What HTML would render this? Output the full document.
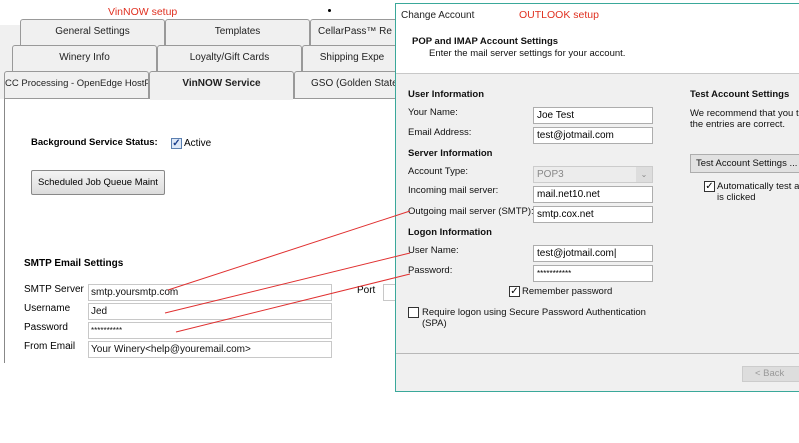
<!DOCTYPE html>
<html><head><style>
*{margin:0;padding:0;box-sizing:border-box}
body{width:799px;height:443px;background:#fff;position:relative;overflow:hidden;font-family:"Liberation Sans",sans-serif;font-size:10px;color:#000}
.a{position:absolute;white-space:nowrap}
.tab{position:absolute;height:26px;border:1px solid #999;border-bottom:none;background:#f0f0f0;text-align:center;line-height:24px;font-size:10px;color:#222;border-radius:3px 3px 0 0;overflow:hidden;white-space:nowrap}
.in{position:absolute;height:17px;border:1px solid #c8c8c8;background:#fff;font-size:10px;line-height:15px;padding-left:2px;color:#111}
.o{font-family:"Liberation Sans",sans-serif;font-size:9.5px;color:#111}
.oi{position:absolute;height:17px;border:1px solid #adadad;background:#fff;font-family:"Liberation Sans",sans-serif;font-size:10px;line-height:15px;padding-left:3px}
</style></head><body>
<div class="a" style="left:108px;top:6px;color:#e03020;font-size:10.5px">VinNOW setup</div>
<div class="a" style="left:328px;top:9px;width:3px;height:3px;background:#000;border-radius:2px"></div>
<div class="a" style="left:0;top:25px;width:395px;height:74px;background:#f0f0f0"></div>
<div class="tab" style="left:20px;top:19px;width:145px;height:26px">General Settings</div>
<div class="tab" style="left:165px;top:19px;width:145px">Templates</div>
<div class="tab" style="left:310px;top:19px;width:90px">CellarPass™ Re</div>
<div class="tab" style="left:12px;top:45px;width:145px">Winery Info</div>
<div class="tab" style="left:157px;top:45px;width:145px">Loyalty/Gift Cards</div>
<div class="tab" style="left:302px;top:45px;width:100px">Shipping Expe</div>
<div class="tab" style="left:4px;top:71px;width:145px;height:28px;font-size:9.5px">CC Processing - OpenEdge HostPay</div>
<div class="tab" style="left:149px;top:71px;width:145px;height:28px;font-weight:bold">VinNOW Service</div>
<div class="tab" style="left:294px;top:71px;width:110px;height:28px;text-align:left;padding-left:16px">GSO (Golden State O</div>
<div class="a" style="left:4px;top:98px;width:395px;height:265px;border-left:1px solid #888;border-top:1px solid #999;background:#fff"></div>
<div class="a" style="left:150px;top:97px;width:143px;height:3px;background:#f0f0f0"></div>
<div class="a" style="left:31px;top:137px;font-weight:bold;font-size:9.5px">Background Service Status:</div>
<div class="a" style="left:171px;top:138px;width:11px;height:11px;border:1px solid #5a7fb0;background:#dde8f7;font-size:10px;line-height:9px;text-align:center;color:#1a3d8a;font-weight:bold">✓</div>
<div class="a" style="left:184px;top:138px">Active</div>
<div class="a" style="left:31px;top:170px;width:134px;height:25px;border:1px solid #888;background:linear-gradient(#f4f4f4,#dcdcdc);border-radius:2px;text-align:center;line-height:23px;font-size:9.5px">Scheduled Job Queue Maint</div>
<div class="a" style="left:24px;top:258px;font-weight:bold">SMTP Email Settings</div>
<div class="a" style="left:24px;top:284px">SMTP Server</div>
<div class="a" style="left:24px;top:303px">Username</div>
<div class="a" style="left:24px;top:322px">Password</div>
<div class="a" style="left:24px;top:341px">From Email</div>
<div class="in" style="left:88px;top:284px;width:244px">smtp.yoursmtp.com</div>
<div class="in" style="left:88px;top:303px;width:244px">Jed</div>
<div class="in" style="left:88px;top:322px;width:244px;font-size:8px">**********</div>
<div class="in" style="left:88px;top:341px;width:244px">Your Winery&lt;help@youremail.com&gt;</div>
<div class="a" style="left:357px;top:285px">Port</div>
<div class="in" style="left:383px;top:284px;width:20px"></div>
<div class="a" style="left:395px;top:3px;width:404px;height:389px;border:1px solid #3aa89a;border-right:none;background:#f0f0f0"></div>
<div class="a" style="left:396px;top:4px;width:403px;height:70px;background:#fff;border-bottom:1px solid #c8c8c8"></div>
<div class="a o" style="left:401px;top:10px;font-size:10px;color:#222">Change Account</div>
<div class="a" style="left:519px;top:9px;color:#e03020;font-size:10.5px">OUTLOOK setup</div>
<div class="a o" style="left:412px;top:36px;font-weight:bold">POP and IMAP Account Settings</div>
<div class="a o" style="left:429px;top:48px">Enter the mail server settings for your account.</div>
<div class="a o" style="left:408px;top:89px;font-weight:bold">User Information</div>
<div class="a o" style="left:408px;top:107px">Your Name:</div>
<div class="a o" style="left:408px;top:127px">Email Address:</div>
<div class="a o" style="left:408px;top:148px;font-weight:bold">Server Information</div>
<div class="a o" style="left:408px;top:166px">Account Type:</div>
<div class="a o" style="left:408px;top:185px">Incoming mail server:</div>
<div class="a o" style="left:408px;top:206px">Outgoing mail server (SMTP):</div>
<div class="a o" style="left:408px;top:227px;font-weight:bold">Logon Information</div>
<div class="a o" style="left:408px;top:245px">User Name:</div>
<div class="a o" style="left:408px;top:265px">Password:</div>
<div class="oi" style="left:533px;top:107px;width:120px">Joe Test</div>
<div class="oi" style="left:533px;top:127px;width:120px">test@jotmail.com</div>
<div class="oi" style="left:533px;top:166px;width:120px;background:#ececec;color:#888;border-color:#ccc">POP3<span style="position:absolute;right:0;top:0;width:16px;height:15px;background:#ddd;text-align:center;font-size:8px">⌄</span></div>
<div class="oi" style="left:533px;top:186px;width:120px">mail.net10.net</div>
<div class="oi" style="left:533px;top:206px;width:120px">smtp.cox.net</div>
<div class="oi" style="left:533px;top:245px;width:120px">test@jotmail.com|</div>
<div class="oi" style="left:533px;top:265px;width:120px;font-size:8px">***********</div>
<div class="a" style="left:509px;top:286px;width:11px;height:11px;border:1px solid #333;background:#fff;font-size:10px;line-height:9px;text-align:center">✓</div>
<div class="a o" style="left:522px;top:286px">Remember password</div>
<div class="a" style="left:408px;top:307px;width:11px;height:11px;border:1px solid #333;background:#fff"></div>
<div class="a o" style="left:422px;top:307px;line-height:11px">Require logon using Secure Password Authentication<br>(SPA)</div>
<div class="a o" style="left:690px;top:89px;font-weight:bold">Test Account Settings</div>
<div class="a o" style="left:690px;top:108px;line-height:11px">We recommend that you te<br>the entries are correct.</div>
<div class="a o" style="left:690px;top:154px;width:110px;height:19px;border:1px solid #adadad;background:#e1e1e1;line-height:17px;padding-left:5px">Test Account Settings ...</div>
<div class="a" style="left:704px;top:181px;width:11px;height:11px;border:1px solid #333;background:#fff;font-size:10px;line-height:9px;text-align:center">✓</div>
<div class="a o" style="left:717px;top:181px;line-height:11px">Automatically test ac<br>is clicked</div>
<div class="a" style="left:396px;top:353px;width:403px;height:1px;background:#b8b8b8"></div>
<div class="a o" style="left:742px;top:366px;width:60px;height:16px;border:1px solid #ccc;background:#ddd;color:#999;line-height:14px;padding-left:12px">&lt; Back</div>
<svg class="a" style="left:0;top:0" width="799" height="443"><g stroke="#e03030" stroke-width="1"><line x1="168" y1="290" x2="410" y2="211"/><line x1="165" y1="313" x2="410" y2="253"/><line x1="176" y1="332" x2="410" y2="274"/></g></svg>
</body></html>
